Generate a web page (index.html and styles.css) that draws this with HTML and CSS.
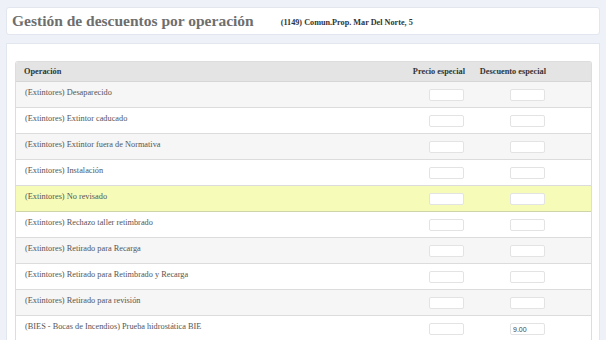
FILE: index.html
```html
<!DOCTYPE html>
<html lang="es">
<head>
<meta charset="utf-8">
<title>Gestión de descuentos por operación</title>
<link rel="stylesheet" href="styles.css">
</head>
<body>
<div class="page">
  <div class="header-card">
    <h1 class="title">Gestión de descuentos por operación</h1>
    <span class="subtitle">(1149) Comun.Prop. Mar Del Norte, 5</span>
  </div>
  <div class="main-card">
    <div class="grid">
      <div class="row head">
        <div class="op">Operación</div>
        <div class="num">Precio especial</div>
        <div class="num">Descuento especial</div>
        <div class="spacer"></div>
      </div>
      <div class="row odd"><div class="op">(Extintores) Desaparecido</div><div class="num"><input class="field" type="text"></div><div class="num"><input class="field" type="text"></div><div class="spacer"></div></div>
      <div class="row"><div class="op">(Extintores) Extintor caducado</div><div class="num"><input class="field" type="text"></div><div class="num"><input class="field" type="text"></div><div class="spacer"></div></div>
      <div class="row odd"><div class="op">(Extintores) Extintor fuera de Normativa</div><div class="num"><input class="field" type="text"></div><div class="num"><input class="field" type="text"></div><div class="spacer"></div></div>
      <div class="row"><div class="op">(Extintores) Instalación</div><div class="num"><input class="field" type="text"></div><div class="num"><input class="field" type="text"></div><div class="spacer"></div></div>
      <div class="row hl"><div class="op">(Extintores) No revisado</div><div class="num"><input class="field" type="text"></div><div class="num"><input class="field" type="text"></div><div class="spacer"></div></div>
      <div class="row"><div class="op">(Extintores) Rechazo taller retimbrado</div><div class="num"><input class="field" type="text"></div><div class="num"><input class="field" type="text"></div><div class="spacer"></div></div>
      <div class="row odd"><div class="op">(Extintores) Retirado para Recarga</div><div class="num"><input class="field" type="text"></div><div class="num"><input class="field" type="text"></div><div class="spacer"></div></div>
      <div class="row"><div class="op">(Extintores) Retirado para Retimbrado y Recarga</div><div class="num"><input class="field" type="text"></div><div class="num"><input class="field" type="text"></div><div class="spacer"></div></div>
      <div class="row odd"><div class="op">(Extintores) Retirado para revisión</div><div class="num"><input class="field" type="text"></div><div class="num"><input class="field" type="text"></div><div class="spacer"></div></div>
      <div class="row"><div class="op">(BIES - Bocas de Incendios) Prueba hidrostática BIE</div><div class="num"><input class="field" type="text"></div><div class="num"><input class="field" type="text" value="9.00"></div><div class="spacer"></div></div>
    </div>
  </div>
</div>
</body>
</html>
```
FILE: styles.css
```css
html, body {
  margin: 0;
  padding: 0;
  background: #eef2f8;
  overflow: hidden;
  height: 340px;
}
.page {
  padding: 7px 6px 0 6px;
  font-family: "Liberation Serif", "Times New Roman", serif;
}
.header-card {
  background: #ffffff;
  border: 1px solid #e2e6ee;
  border-radius: 3px;
  height: 26px;
  display: flex;
  align-items: center;
  padding-left: 5px;
}
.title {
  margin: 0;
  font-size: 15.5px;
  font-weight: bold;
  color: #6e6e6e;
}
.subtitle {
  margin-left: 27px;
  font-size: 8.2px;
  font-weight: bold;
  color: #333333;
  padding-top: 2px;
}
.main-card {
  margin-top: 8px;
  background: #ffffff;
  border: 1px solid #e2e6ee;
  border-bottom: none;
  padding: 17px 7px 0 8px;
  height: 300px;
}
.grid {
  border: 1px solid #dddddd;
  border-bottom: none;
  border-radius: 3px 3px 0 0;
  overflow: hidden;
  font-size: 8.3px;
  color: #555555;
}
.row {
  display: grid;
  grid-template-columns: 1fr 65px 81px 45px;
  height: 25px;
  border-bottom: 1px solid #dcdcdc;
  background: #ffffff;
}
.row.odd {
  background: #f6f6f6;
}
.row.hl {
  background: #f6fcb8;
  border-bottom-color: #cfd3a8;
}
.row.head {
  height: 19px;
  background: #e4e4e4;
  border-bottom-color: #d6d6d6;
  font-weight: bold;
  color: #333333;
  align-items: center;
}
.op {
  padding-left: 9px;
  line-height: 21px;
  white-space: nowrap;
}
.head .op {
  padding-left: 8px;
  line-height: 19px;
}
.num {
  display: flex;
  justify-content: flex-end;
  white-space: nowrap;
}
.row:not(.head) .num {
  padding-top: 7px;
  padding-right: 1px;
  align-items: flex-start;
}
.field {
  box-sizing: border-box;
  width: 35px;
  height: 12px;
  border: 1px solid #e3e3e3;
  border-radius: 2px;
  background: #ffffff;
  font-family: "Liberation Sans", Arial, sans-serif;
  font-size: 7px;
  color: #444444;
  padding: 0 2px;
  margin: 0;
  display: block;
}
```
